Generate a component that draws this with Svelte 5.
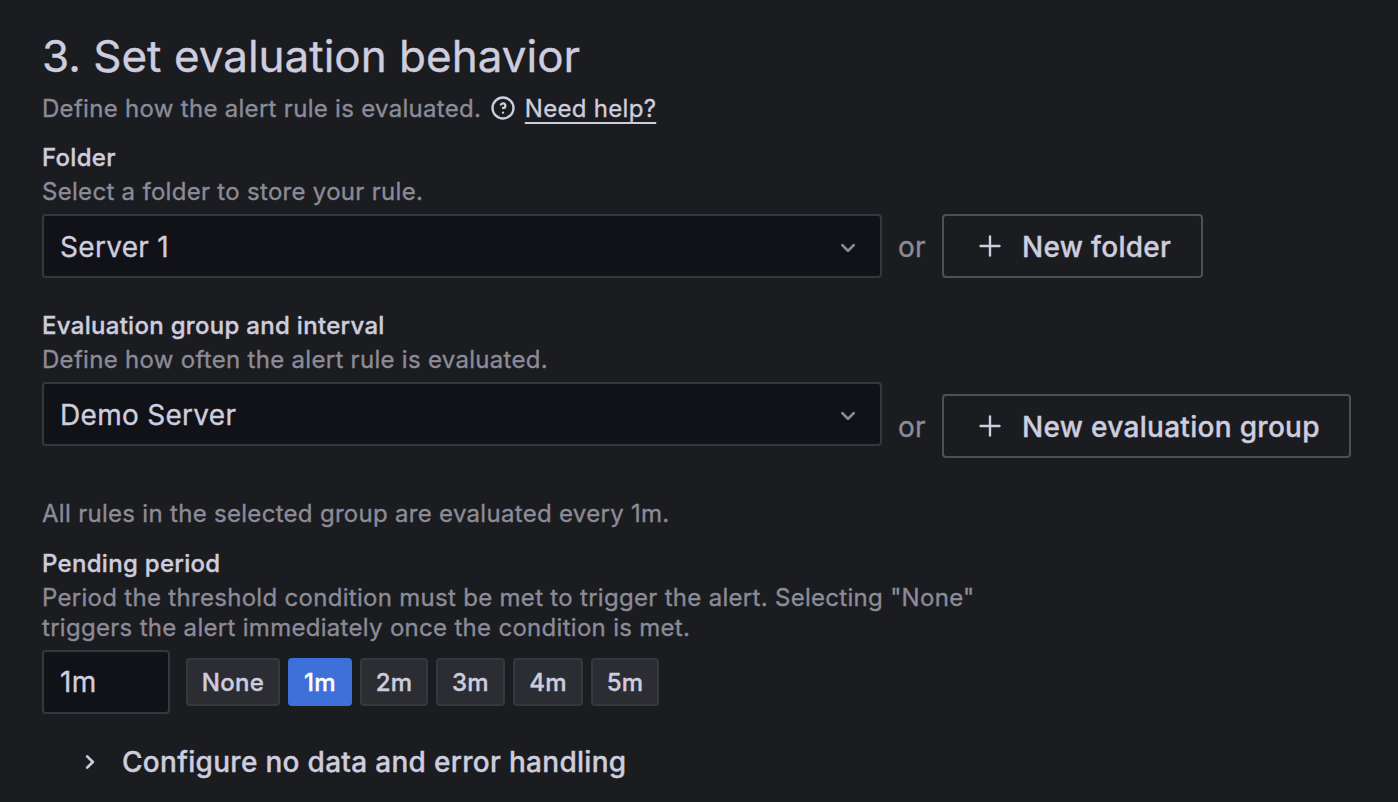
<script>
  const periods = ['None', '1m', '2m', '3m', '4m', '5m'];
  const widths = [94, 64, 68, 69, 70, 68];
  let selected = $state('1m');
</script>

{#snippet chevron()}
  <svg class="chev" width="32" height="32" viewBox="0 0 24 24"><path d="M17,9.17a1,1,0,0,0-1.41,0L12,12.71,8.46,9.17a1,1,0,0,0-1.41,0,1,1,0,0,0,0,1.42l4.24,4.24a1,1,0,0,0,1.42,0L17,10.59A1,1,0,0,0,17,9.17Z" /></svg>
{/snippet}

{#snippet plus()}
  <svg class="plus" width="32" height="32" viewBox="0 0 24 24"><path d="M19.1,11.1H12.9V4.9a.9,.9,0,0,0-1.8,0v6.2H4.9a.9,.9,0,0,0,0,1.8h6.2v6.2a.9,.9,0,0,0,1.8,0V12.9h6.2a.9,.9,0,0,0,0-1.8Z" /></svg>
{/snippet}

<main>
  <h1>3. Set evaluation behavior</h1>
  <div class="intro">
    <span>Define how the alert rule is evaluated.</span>
    <svg width="28" height="28" viewBox="0 0 24 24"><path d="M11.29,15.29a1.58,1.58,0,0,0-.12.15.76.76,0,0,0-.09.18.64.64,0,0,0-.06.18,1.36,1.36,0,0,0,0,.2.84.84,0,0,0,.08.38.9.9,0,0,0,.54.54.94.94,0,0,0,.76,0,.9.9,0,0,0,.54-.54A1,1,0,0,0,13,16a1,1,0,0,0-.29-.71A1,1,0,0,0,11.29,15.29ZM12,2A10,10,0,1,0,22,12,10,10,0,0,0,12,2Zm0,18a8,8,0,1,1,8-8A8,8,0,0,1,12,20ZM12,7A3,3,0,0,0,9.4,8.5a1,1,0,1,0,1.73,1A1,1,0,0,1,12,9a1,1,0,0,1,0,2,1,1,0,1,0,0,2,3,3,0,0,0,0-6Z" /></svg>
    <span class="help">Need help?</span>
  </div>

  <section class="folder">
    <h2>Folder</h2>
    <p>Select a folder to store your rule.</p>
    <div class="line">
      <div class="select"><span>Server 1</span>{@render chevron()}</div>
      <span class="or">or</span>
      <button class="new nf">{@render plus()}<span>New folder</span></button>
    </div>
  </section>

  <section class="group">
    <h2>Evaluation group and interval</h2>
    <p>Define how often the alert rule is evaluated.</p>
    <div class="line">
      <div class="select"><span>Demo Server</span>{@render chevron()}</div>
      <div class="lower">
        <span class="or">or</span>
        <button class="new ng">{@render plus()}<span>New evaluation group</span></button>
      </div>
    </div>
  </section>

  <p class="every">All rules in the selected group are evaluated every 1m.</p>

  <section class="pending">
    <h2>Pending period</h2>
    <p>Period the threshold condition must be met to trigger the alert. Selecting "None"<br />triggers the alert immediately once the condition is met.</p>
    <div class="picks">
      <div class="input">1m</div>
      {#each periods as p, i}
        <button class="pick" class:on={selected === p} style="width: {widths[i]}px" onclick={() => (selected = p)}>{p}</button>
      {/each}
    </div>
  </section>

  <div class="more">
    <svg width="32" height="32" viewBox="0 0 24 24"><path d="M14.83,11.29,10.59,7.05a1,1,0,0,0-1.42,0,1,1,0,0,0,0,1.41L12.71,12,9.17,15.54a1,1,0,0,0,0,1.41,1,1,0,0,0,.71.29,1,1,0,0,0,.71-.29l4.24-4.24A1,1,0,0,0,14.83,11.29Z" /></svg>
    <span>Configure no data and error handling</span>
  </div>
</main>

<style>
  :global(body) { margin: 0; background: #1b1c20; }
  main {
    box-sizing: border-box;
    width: 1398px;
    height: 802px;
    overflow: hidden;
    padding: 28px 42px 0;
    background: #1b1c20;
    color: #cecddf;
    font-family: Inter, sans-serif;
    font-size: 24px;
    line-height: 30px;
    letter-spacing: 0.298px;
    white-space: nowrap;
    -webkit-text-stroke: 0.35px currentColor;
  }
  svg { fill: currentColor; flex: none; display: block; }
  h1, h2, p { margin: 0; }
  h1 { font-size: 44px; line-height: 56px; font-weight: 400; letter-spacing: 0; }
  h2 { font-size: 24px; line-height: 30px; font-weight: 500; }
  p { color: #8c8b98; }
  .intro { display: flex; align-items: center; height: 30px; margin-top: 10px; color: #8c8b98; }
  .intro svg { margin: -2px 8px 0 7.5px; color: #cecddf; }
  .help {
    color: #cecddf;
    text-decoration: underline;
    text-decoration-thickness: 2px;
    text-underline-offset: 5px;
  }
  .folder { margin-top: 19px; }
  section p { margin-top: 4px; }
  .line { display: flex; margin-top: 7px; height: 64px; font-size: 28px; }
  .select {
    box-sizing: border-box;
    width: 840px;
    height: 64px;
    padding: 2px 16px 0;
    border: 2px solid #36373c;
    border-radius: 4px;
    background: #111217;
    display: flex;
    align-items: center;
    justify-content: space-between;
  }
  .chev { color: #8c8b98; margin-top: 1px; }
  .or { width: 60px; text-align: center; line-height: 66px; color: #8c8b98; font-size: 28px; }
  .lower { display: flex; margin-top: 12px; }
  button {
    box-sizing: border-box;
    padding: 0;
    font-family: inherit;
    font-weight: 500;
    letter-spacing: inherit;
    color: #cecddf;
    -webkit-text-stroke: 0.35px currentColor;
  }
  .new {
    height: 64px;
    border: 2px solid #4f4f58;
    border-radius: 4px;
    background: transparent;
    display: flex;
    align-items: center;
    font-size: 28px;
    padding: 2px 0 0 30px;
    gap: 16px;
  }
  .plus { margin-top: -2px; }
  .nf { width: 261px; }
  .ng { width: 409px; }
  .group { margin-top: 33px; }
  .every { margin-top: 53px; }
  .pending { margin-top: 20px; }
  .picks { display: flex; align-items: center; gap: 8px; margin-top: 7px; }
  .input {
    box-sizing: border-box;
    width: 128px;
    height: 64px;
    margin-right: 8px;
    padding-left: 16px;
    border: 2px solid #36373c;
    border-radius: 4px;
    background: #111217;
    font-size: 28px;
    line-height: 60px;
  }
  .pick { height: 48px; border: 2px solid #37383d; border-radius: 4px; background: #2c2d32; font-size: 24px; }
  .pick.on { background: #3d71d9; border-color: #3d71d9; color: #fff; }
  .more { display: flex; align-items: center; gap: 16px; height: 32px; margin: 32px 0 0 32px; font-size: 28px; font-weight: 500; }
</style>
